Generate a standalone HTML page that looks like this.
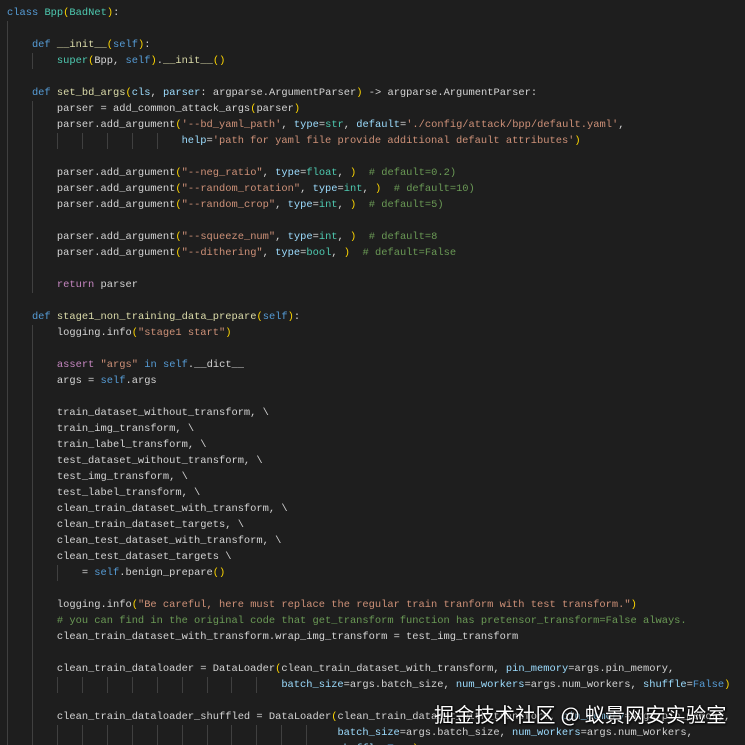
<!DOCTYPE html>
<html><head><meta charset="utf-8"><style>
html,body{margin:0;padding:0;background:#1e1e1e;width:745px;height:745px;overflow:hidden;position:relative}
#c{position:absolute;left:7px;top:5px;font-family:"Liberation Mono",monospace;font-size:10.4px;color:#d4d4d4}
.l{height:16px;line-height:16px;white-space:pre}
i{display:inline-block;width:4ch;height:16px;vertical-align:top;box-shadow:inset 1px 0 #404040;font-style:normal}
.k{color:#569cd6}.f{color:#dcdcaa}.c{color:#4ec9b0}.s{color:#ce9178}.p{color:#9cdcfe}.m{color:#6a9955}.b{color:#ffd700}.r{color:#c586c0}
#w{position:absolute;left:434px;top:699px;font-family:"Noto Sans CJK SC",sans-serif;font-size:20px;color:#fff;text-shadow:0 0 2px #000,1px 1px 2px #000;white-space:nowrap;letter-spacing:0.3px}
</style></head><body>
<div id="c"><div class="l"><span class="k">class</span> <span class="c">Bpp</span><span class="b">(</span><span class="c">BadNet</span><span class="b">)</span>:</div><div class="l"><i></i></div><div class="l"><i></i><span class="k">def</span> <span class="f">__init__</span><span class="b">(</span><span class="k">self</span><span class="b">)</span>:</div><div class="l"><i></i><i></i><span class="c">super</span><span class="b">(</span>Bpp, <span class="k">self</span><span class="b">)</span>.<span class="f">__init__</span><span class="b">()</span></div><div class="l"><i></i></div><div class="l"><i></i><span class="k">def</span> <span class="f">set_bd_args</span><span class="b">(</span><span class="p">cls</span>, <span class="p">parser</span>: argparse.ArgumentParser<span class="b">)</span> -&gt; argparse.ArgumentParser:</div><div class="l"><i></i><i></i>parser = add_common_attack_args<span class="b">(</span>parser<span class="b">)</span></div><div class="l"><i></i><i></i>parser.add_argument<span class="b">(</span><span class="s">'--bd_yaml_path'</span>, <span class="p">type</span>=<span class="c">str</span>, <span class="p">default</span>=<span class="s">'./config/attack/bpp/default.yaml'</span>,</div><div class="l"><i></i><i></i><i></i><i></i><i></i><i></i><i></i><span class="p">help</span>=<span class="s">'path for yaml file provide additional default attributes'</span><span class="b">)</span></div><div class="l"><i></i><i></i></div><div class="l"><i></i><i></i>parser.add_argument<span class="b">(</span><span class="s">"--neg_ratio"</span>, <span class="p">type</span>=<span class="c">float</span>, <span class="b">)</span>  <span class="m"># default=0.2)</span></div><div class="l"><i></i><i></i>parser.add_argument<span class="b">(</span><span class="s">"--random_rotation"</span>, <span class="p">type</span>=<span class="c">int</span>, <span class="b">)</span>  <span class="m"># default=10)</span></div><div class="l"><i></i><i></i>parser.add_argument<span class="b">(</span><span class="s">"--random_crop"</span>, <span class="p">type</span>=<span class="c">int</span>, <span class="b">)</span>  <span class="m"># default=5)</span></div><div class="l"><i></i><i></i></div><div class="l"><i></i><i></i>parser.add_argument<span class="b">(</span><span class="s">"--squeeze_num"</span>, <span class="p">type</span>=<span class="c">int</span>, <span class="b">)</span>  <span class="m"># default=8</span></div><div class="l"><i></i><i></i>parser.add_argument<span class="b">(</span><span class="s">"--dithering"</span>, <span class="p">type</span>=<span class="c">bool</span>, <span class="b">)</span>  <span class="m"># default=False</span></div><div class="l"><i></i><i></i></div><div class="l"><i></i><i></i><span class="r">return</span> parser</div><div class="l"><i></i></div><div class="l"><i></i><span class="k">def</span> <span class="f">stage1_non_training_data_prepare</span><span class="b">(</span><span class="k">self</span><span class="b">)</span>:</div><div class="l"><i></i><i></i>logging.info<span class="b">(</span><span class="s">"stage1 start"</span><span class="b">)</span></div><div class="l"><i></i><i></i></div><div class="l"><i></i><i></i><span class="r">assert</span> <span class="s">"args"</span> <span class="k">in</span> <span class="k">self</span>.__dict__</div><div class="l"><i></i><i></i>args = <span class="k">self</span>.args</div><div class="l"><i></i><i></i></div><div class="l"><i></i><i></i>train_dataset_without_transform, \</div><div class="l"><i></i><i></i>train_img_transform, \</div><div class="l"><i></i><i></i>train_label_transform, \</div><div class="l"><i></i><i></i>test_dataset_without_transform, \</div><div class="l"><i></i><i></i>test_img_transform, \</div><div class="l"><i></i><i></i>test_label_transform, \</div><div class="l"><i></i><i></i>clean_train_dataset_with_transform, \</div><div class="l"><i></i><i></i>clean_train_dataset_targets, \</div><div class="l"><i></i><i></i>clean_test_dataset_with_transform, \</div><div class="l"><i></i><i></i>clean_test_dataset_targets \</div><div class="l"><i></i><i></i><i></i>= <span class="k">self</span>.benign_prepare<span class="b">()</span></div><div class="l"><i></i><i></i></div><div class="l"><i></i><i></i>logging.info<span class="b">(</span><span class="s">"Be careful, here must replace the regular train tranform with test transform."</span><span class="b">)</span></div><div class="l"><i></i><i></i><span class="m"># you can find in the original code that get_transform function has pretensor_transform=False always.</span></div><div class="l"><i></i><i></i>clean_train_dataset_with_transform.wrap_img_transform = test_img_transform</div><div class="l"><i></i><i></i></div><div class="l"><i></i><i></i>clean_train_dataloader = DataLoader<span class="b">(</span>clean_train_dataset_with_transform, <span class="p">pin_memory</span>=args.pin_memory,</div><div class="l"><i></i><i></i><i></i><i></i><i></i><i></i><i></i><i></i><i></i><i></i><i></i><span class="p">batch_size</span>=args.batch_size, <span class="p">num_workers</span>=args.num_workers, <span class="p">shuffle</span>=<span class="k">False</span><span class="b">)</span></div><div class="l"><i></i><i></i></div><div class="l"><i></i><i></i>clean_train_dataloader_shuffled = DataLoader<span class="b">(</span>clean_train_dataset_with_transform, <span class="p">pin_memory</span>=args.pin_memory,</div><div class="l"><i></i><i></i><i></i><i></i><i></i><i></i><i></i><i></i><i></i><i></i><i></i><i></i><i></i> <span class="p">batch_size</span>=args.batch_size, <span class="p">num_workers</span>=args.num_workers,</div><div class="l"><i></i><i></i><i></i><i></i><i></i><i></i><i></i><i></i><i></i><i></i><i></i><i></i><i></i> <span class="p">shuffle</span>=<span class="k">True</span><span class="b">)</span></div></div>
<div id="w">掘金技术社区 @ 蚁景网安实验室</div>
</body></html>
